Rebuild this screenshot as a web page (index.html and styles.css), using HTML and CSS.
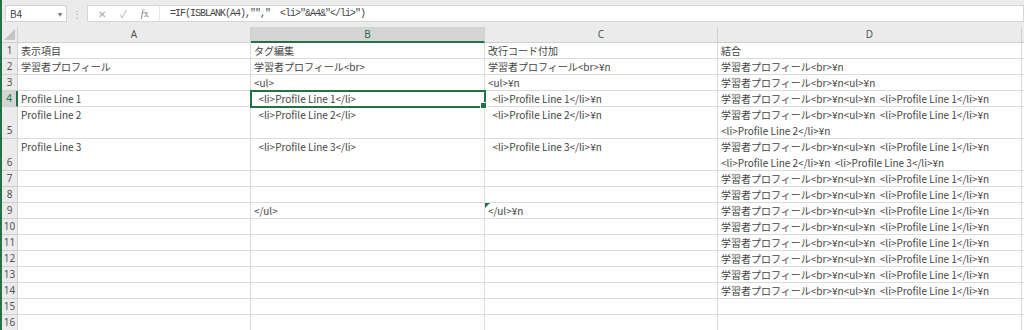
FILE: index.html
```html
<!DOCTYPE html>
<html lang="ja">
<head>
    <meta charset="UTF-8">
    <title>Book1 - Excel</title>
    <link rel="stylesheet" href="styles.css">
</head>
<body>
    <div class="window">
        <div class="formula-bar">
            <div class="name-box">
                <span>B4</span>
                <span class="caret">&#9662;</span>
            </div>
            <div class="grip">&#8942;</div>
            <div class="fx-buttons">
                <span class="fx-btn">&#10005;</span>
                <span class="fx-btn">&#10003;</span>
                <span class="fx-btn fx"><i>f</i>x</span>
            </div>
            <div class="formula">=IF(ISBLANK(A4),"","  &lt;li&gt;"&amp;A4&amp;"&lt;/li&gt;")</div>
        </div>

        <div class="sheet">
            <!-- column headers -->
            <div class="corner"><span class="tri"></span></div>
            <div class="col-head">A</div>
            <div class="col-head selected">B</div>
            <div class="col-head">C</div>
            <div class="col-head">D</div>
            <div class="col-head rest"></div>

            <!-- row 1 -->
            <div class="row-head">1</div>
            <div class="cell">表示項目</div>
            <div class="cell">タグ編集</div>
            <div class="cell">改行コード付加</div>
            <div class="cell">結合</div>
            <div class="cell rest"></div>

            <!-- row 2 -->
            <div class="row-head">2</div>
            <div class="cell">学習者プロフィール</div>
            <div class="cell">学習者プロフィール&lt;br&gt;</div>
            <div class="cell">学習者プロフィール&lt;br&gt;¥n</div>
            <div class="cell">学習者プロフィール&lt;br&gt;¥n</div>
            <div class="cell rest"></div>

            <!-- row 3 -->
            <div class="row-head">3</div>
            <div class="cell"></div>
            <div class="cell">&lt;ul&gt;</div>
            <div class="cell">&lt;ul&gt;¥n</div>
            <div class="cell">学習者プロフィール&lt;br&gt;¥n&lt;ul&gt;¥n</div>
            <div class="cell rest"></div>

            <!-- row 4 -->
            <div class="row-head selected">4</div>
            <div class="cell">Profile Line 1</div>
            <div class="cell active">  &lt;li&gt;Profile Line 1&lt;/li&gt;</div>
            <div class="cell">  &lt;li&gt;Profile Line 1&lt;/li&gt;¥n</div>
            <div class="cell">学習者プロフィール&lt;br&gt;¥n&lt;ul&gt;¥n  &lt;li&gt;Profile Line 1&lt;/li&gt;¥n</div>
            <div class="cell rest"></div>

            <!-- row 5 -->
            <div class="row-head tall">5</div>
            <div class="cell">Profile Line 2</div>
            <div class="cell">  &lt;li&gt;Profile Line 2&lt;/li&gt;</div>
            <div class="cell">  &lt;li&gt;Profile Line 2&lt;/li&gt;¥n</div>
            <div class="cell">学習者プロフィール&lt;br&gt;¥n&lt;ul&gt;¥n  &lt;li&gt;Profile Line 1&lt;/li&gt;¥n
&lt;li&gt;Profile Line 2&lt;/li&gt;¥n</div>
            <div class="cell rest"></div>

            <!-- row 6 -->
            <div class="row-head tall">6</div>
            <div class="cell">Profile Line 3</div>
            <div class="cell">  &lt;li&gt;Profile Line 3&lt;/li&gt;</div>
            <div class="cell">  &lt;li&gt;Profile Line 3&lt;/li&gt;¥n</div>
            <div class="cell">学習者プロフィール&lt;br&gt;¥n&lt;ul&gt;¥n  &lt;li&gt;Profile Line 1&lt;/li&gt;¥n
&lt;li&gt;Profile Line 2&lt;/li&gt;¥n  &lt;li&gt;Profile Line 3&lt;/li&gt;¥n</div>
            <div class="cell rest"></div>

            <!-- row 7 -->
            <div class="row-head">7</div>
            <div class="cell"></div>
            <div class="cell"></div>
            <div class="cell"></div>
            <div class="cell">学習者プロフィール&lt;br&gt;¥n&lt;ul&gt;¥n  &lt;li&gt;Profile Line 1&lt;/li&gt;¥n</div>
            <div class="cell rest"></div>

            <!-- row 8 -->
            <div class="row-head">8</div>
            <div class="cell"></div>
            <div class="cell"></div>
            <div class="cell"></div>
            <div class="cell">学習者プロフィール&lt;br&gt;¥n&lt;ul&gt;¥n  &lt;li&gt;Profile Line 1&lt;/li&gt;¥n</div>
            <div class="cell rest"></div>

            <!-- row 9 -->
            <div class="row-head">9</div>
            <div class="cell"></div>
            <div class="cell">&lt;/ul&gt;</div>
            <div class="cell flagged">&lt;/ul&gt;¥n</div>
            <div class="cell">学習者プロフィール&lt;br&gt;¥n&lt;ul&gt;¥n  &lt;li&gt;Profile Line 1&lt;/li&gt;¥n</div>
            <div class="cell rest"></div>

            <!-- row 10 -->
            <div class="row-head">10</div>
            <div class="cell"></div>
            <div class="cell"></div>
            <div class="cell"></div>
            <div class="cell">学習者プロフィール&lt;br&gt;¥n&lt;ul&gt;¥n  &lt;li&gt;Profile Line 1&lt;/li&gt;¥n</div>
            <div class="cell rest"></div>

            <!-- row 11 -->
            <div class="row-head">11</div>
            <div class="cell"></div>
            <div class="cell"></div>
            <div class="cell"></div>
            <div class="cell">学習者プロフィール&lt;br&gt;¥n&lt;ul&gt;¥n  &lt;li&gt;Profile Line 1&lt;/li&gt;¥n</div>
            <div class="cell rest"></div>

            <!-- row 12 -->
            <div class="row-head">12</div>
            <div class="cell"></div>
            <div class="cell"></div>
            <div class="cell"></div>
            <div class="cell">学習者プロフィール&lt;br&gt;¥n&lt;ul&gt;¥n  &lt;li&gt;Profile Line 1&lt;/li&gt;¥n</div>
            <div class="cell rest"></div>

            <!-- row 13 -->
            <div class="row-head">13</div>
            <div class="cell"></div>
            <div class="cell"></div>
            <div class="cell"></div>
            <div class="cell">学習者プロフィール&lt;br&gt;¥n&lt;ul&gt;¥n  &lt;li&gt;Profile Line 1&lt;/li&gt;¥n</div>
            <div class="cell rest"></div>

            <!-- row 14 -->
            <div class="row-head">14</div>
            <div class="cell"></div>
            <div class="cell"></div>
            <div class="cell"></div>
            <div class="cell">学習者プロフィール&lt;br&gt;¥n&lt;ul&gt;¥n  &lt;li&gt;Profile Line 1&lt;/li&gt;¥n</div>
            <div class="cell rest"></div>

            <!-- row 15 -->
            <div class="row-head">15</div>
            <div class="cell"></div>
            <div class="cell"></div>
            <div class="cell"></div>
            <div class="cell"></div>
            <div class="cell rest"></div>

            <!-- row 16 -->
            <div class="row-head">16</div>
            <div class="cell"></div>
            <div class="cell"></div>
            <div class="cell"></div>
            <div class="cell"></div>
            <div class="cell rest"></div>
        </div>
    </div>
</body>
</html>
```

FILE: styles.css
```css
body {
    margin: 0;
    background-color: #ffffff;
    font-family: "Noto Sans CJK JP", "Noto Sans", sans-serif;
    overflow: hidden;
}

.window {
    height: 330px;
    border-left: 2px solid #217346;
    box-sizing: border-box;
}

/* formula bar */

.formula-bar {
    display: flex;
    align-items: center;
    height: 27px;
    padding: 5px 0 5px 3px;
    box-sizing: border-box;
    background-color: #ebebeb;
}

.name-box {
    display: flex;
    justify-content: space-between;
    align-items: center;
    width: 62px;
    height: 17px;
    padding: 0 4px;
    box-sizing: border-box;
    background-color: #ffffff;
    border: 1px solid #d2d2d2;
    font-size: 10px;
    color: #444444;
}

.name-box .caret {
    font-size: 8px;
    color: #777777;
}

.grip {
    width: 20px;
    text-align: center;
    font-size: 10px;
    color: #a6a6a6;
}

.fx-buttons {
    display: flex;
    align-items: center;
    gap: 14px;
    height: 17px;
    padding: 0 8px 0 10px;
    box-sizing: border-box;
    background-color: #ffffff;
    border: 1px solid #d6d6d6;
    border-right: none;
    width: 72px;
}

.fx-btn {
    font-size: 10px;
    color: #a8a8a8;
}

.fx-btn.fx {
    font-family: "Liberation Serif", serif;
    font-size: 10px;
    color: #777777;
}

.formula {
    flex: 1;
    height: 17px;
    line-height: 16px;
    padding-left: 10px;
    box-sizing: border-box;
    background-color: #ffffff;
    border: 1px solid #d6d6d6;
    border-left: 1px solid #e4e4e4;
    font-family: "Liberation Mono", monospace;
    font-size: 10px;
    letter-spacing: -1px;
    color: #444444;
    white-space: pre;
}

/* sheet grid */

.sheet {
    display: grid;
    grid-template-columns: 16px 233px 234px 233px 304px 1fr;
    grid-template-rows: 16px repeat(4, 16px) 32px 32px repeat(10, 16px);
}

.corner,
.col-head,
.row-head {
    background-color: #ebebeb;
    color: #555555;
    border-right: 1px solid #d0d0d0;
    border-bottom: 1px solid #d0d0d0;
    box-sizing: border-box;
}

.corner {
    position: relative;
}

.corner .tri {
    position: absolute;
    right: 2px;
    bottom: 2px;
    width: 0;
    height: 0;
    border-left: 11px solid transparent;
    border-bottom: 11px solid #c4c4c4;
}

.col-head {
    text-align: center;
    font-family: "Noto Sans", sans-serif;
    font-size: 10px;
    line-height: 15px;
}

.col-head.selected {
    background-color: #d4d4d4;
    color: #217346;
    border-bottom: 2px solid #217346;
}

.row-head {
    display: flex;
    align-items: flex-end;
    justify-content: center;
    font-family: "Noto Sans", sans-serif;
    font-size: 10px;
    line-height: 15px;
}

.row-head.selected {
    background-color: #d4d4d4;
    color: #217346;
    border-right: 2px solid #217346;
}

.cell {
    position: relative;
    padding-left: 3px;
    border-right: 1px solid #dcdcdc;
    border-bottom: 1px solid #dcdcdc;
    box-sizing: border-box;
    font-size: 10px;
    line-height: 16px;
    color: #444444;
    white-space: pre;
    overflow: visible;
}

.cell.rest {
    border-right: none;
}

.cell.active {
    outline: 2px solid #217346;
    outline-offset: -1px;
    z-index: 2;
}

.cell.active::after {
    content: "";
    position: absolute;
    right: -3px;
    bottom: -3px;
    width: 5px;
    height: 5px;
    background-color: #217346;
    border: 1px solid #ffffff;
}

.cell.flagged::before {
    content: "";
    position: absolute;
    left: 0;
    top: 0;
    width: 0;
    height: 0;
    border-top: 5px solid #217346;
    border-right: 5px solid transparent;
}
```
